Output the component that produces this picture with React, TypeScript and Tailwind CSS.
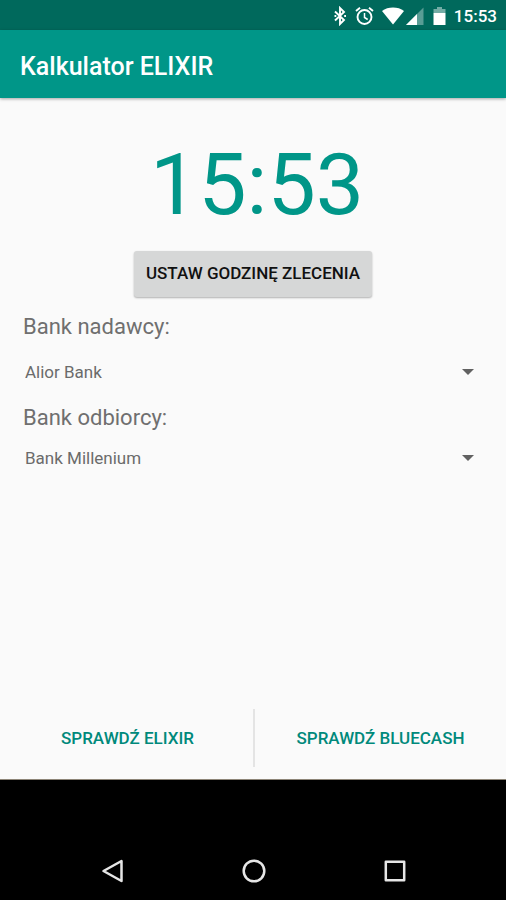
import { useState } from "react";

const banks = ["Alior Bank", "Bank Millenium", "mBank", "ING Bank Śląski", "PKO BP"];

function StatusBar() {
  return (
    <div className="flex h-[30px] shrink-0 items-center justify-end bg-[#00695c] pt-px pr-[9px] text-white">
      <svg className="mr-2 h-5 w-[14px]" viewBox="0 0 14 20" fill="none" stroke="currentColor" strokeWidth="1.9" aria-hidden="true">
        <path d="M2 5.500 11 14 7 18V2l4 4-9 8.500" />
        <path d="M1.500 10h1.800M11.200 10h1.800" strokeWidth="2.200" />
      </svg>
      <svg className="mr-2 h-5 w-[19px]" viewBox="0 0 19 20" fill="none" stroke="currentColor" strokeWidth="1.900" aria-hidden="true">
        <circle cx="9.500" cy="11" r="7" />
        <path d="M9.500 7v4.500l3.200 2" strokeWidth="1.500" />
        <path d="M1 5 5 1.700M18 5l-4-3.300" />
      </svg>
      <svg className="mr-[2px] h-5 w-[22px]" viewBox="0 0 22 20" fill="currentColor" aria-hidden="true">
        <path d="M11 18.500 0 5C3 2.500 7 1.500 11 1.500S19 2.500 22 5Z" />
      </svg>
      <svg className="mr-[9px] h-5 w-[18px]" viewBox="0 0 18 20" fill="currentColor" aria-hidden="true">
        <path d="M17.500 1.500V19H0Z" opacity=".35" />
        <path d="M11 8v11H0Z" />
      </svg>
      <svg className="mr-2 h-5 w-[13px]" viewBox="0 0 13 20" fill="currentColor" aria-hidden="true">
        <path d="M4 1h5v2h3.500v4H.5V3H4Z" opacity=".45" />
        <path d="M.5 7h12v12H.5Z" />
      </svg>
      <span className="text-[17px] leading-5 font-medium">15:53</span>
    </div>
  );
}

function BankSelect({ id, value, onChange }: { id: string; value: string; onChange: (v: string) => void }) {
  return (
    <div className="grid items-center">
      <select
        id={id}
        value={value}
        onChange={(e) => onChange(e.target.value)}
        className="col-start-1 row-start-1 h-11 w-full appearance-none bg-transparent pr-10 pl-[2px] text-[17px] text-[#6b6b6b]"
      >
        {banks.map((b) => (
          <option key={b}>{b}</option>
        ))}
      </select>
      <svg className="pointer-events-none col-start-1 row-start-1 mr-[9px] mb-[2px] h-[6px] w-3 justify-self-end" viewBox="0 0 12 6" fill="#616161" aria-hidden="true">
        <path d="M0 0h12L6 6Z" />
      </svg>
    </div>
  );
}

export default function App() {
  const [sender, setSender] = useState("Alior Bank");
  const [receiver, setReceiver] = useState("Bank Millenium");

  return (
    <div className="flex min-h-screen flex-col bg-[#fafafa] font-[Roboto,sans-serif]">
      <StatusBar />
      <header className="flex h-[68px] shrink-0 items-center bg-[#009688] px-5 pt-[6px] shadow-[0_1px_3px_rgba(0,0,0,0.35)]">
        <h1 className="text-[25px] leading-8 font-medium text-white">Kalkulator ELIXIR</h1>
      </header>

      <main className="flex grow flex-col px-[23px] pt-[37px]">
        <time className="self-center pl-2 text-[86px] leading-[100px] text-[#009688]">15:53</time>
        <button
          type="button"
          className="mt-4 h-[46px] self-center rounded-[3px] bg-[#d6d7d7] px-3 text-[17px] font-medium text-[#111111] shadow-[0_1px_2px_rgba(0,0,0,0.3)]"
        >
          USTAW GODZINĘ ZLECENIA
        </button>

        <label htmlFor="sender" className="mt-4 mb-[10px] text-[22px] leading-7 text-[#6f6f6f]">
          Bank nadawcy:
        </label>
        <BankSelect id="sender" value={sender} onChange={setSender} />
        <label htmlFor="receiver" className="mt-[9px] mb-[5px] text-[22px] leading-7 text-[#6f6f6f]">
          Bank odbiorcy:
        </label>
        <BankSelect id="receiver" value={receiver} onChange={setReceiver} />
      </main>

      <div className="mb-3 flex h-[58px] shrink-0 pt-0 pl-[2px] text-[17px] font-medium text-[#00897b]">
        <button type="button" className="flex-1 pt-[2px]">SPRAWDŹ ELIXIR</button>
        <div className="w-[2px] bg-[#e4e4e4]" />
        <button type="button" className="flex-1 pt-[2px]">SPRAWDŹ BLUECASH</button>
      </div>

      <nav className="grid h-[121px] shrink-0 grid-cols-3 items-end justify-items-center border-t border-[#8d8577] bg-black pr-10 pb-4 pl-[42px] text-[#e6e6e6]">
        <button type="button" aria-label="Wstecz">
          <svg className="h-[26px] w-[26px]" viewBox="0 0 26 26" fill="none" stroke="currentColor" strokeWidth="2.500" strokeLinejoin="round">
            <path d="M21.500 3v20L3.500 13Z" />
          </svg>
        </button>
        <button type="button" aria-label="Ekran główny">
          <svg className="h-[26px] w-[26px]" viewBox="0 0 26 26" fill="none" stroke="currentColor" strokeWidth="2.500">
            <circle cx="13" cy="13" r="10.300" />
          </svg>
        </button>
        <button type="button" aria-label="Ostatnie">
          <svg className="h-[26px] w-[26px]" viewBox="0 0 26 26" fill="none" stroke="currentColor" strokeWidth="2.500" strokeLinejoin="round">
            <path d="M3.800 3.800h18.400v18.400H3.800Z" />
          </svg>
        </button>
      </nav>
    </div>
  );
}
